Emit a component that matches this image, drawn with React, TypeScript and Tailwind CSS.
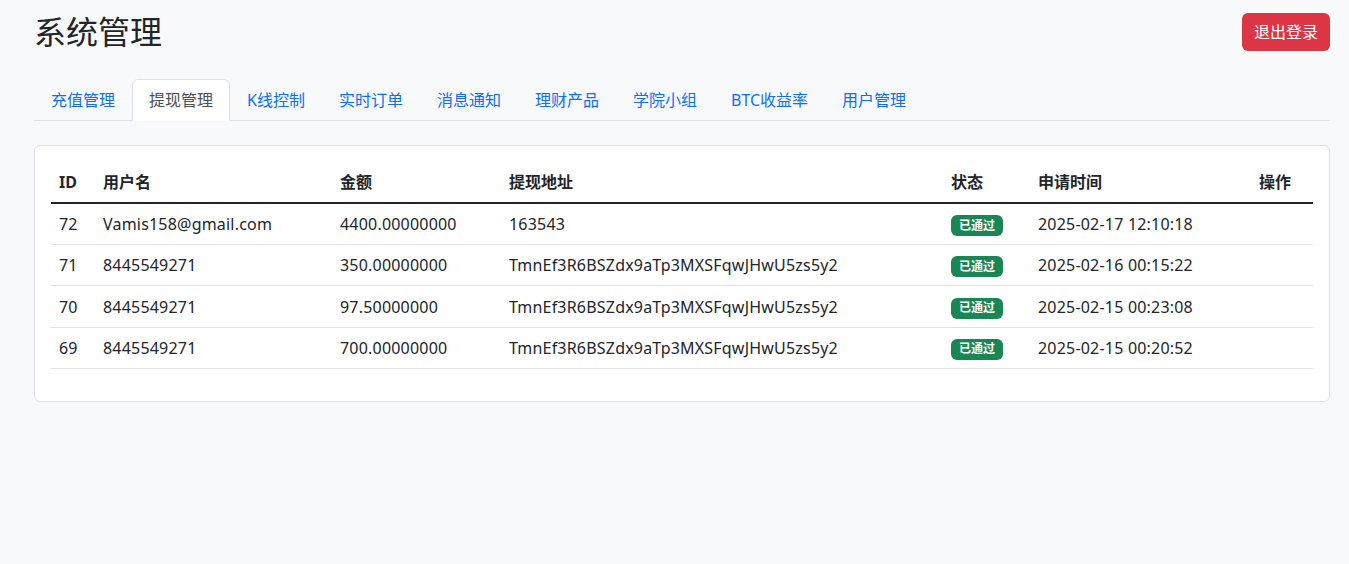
import React from "react";

const tabs = ["充值管理", "提现管理", "K线控制", "实时订单", "消息通知", "理财产品", "学院小组", "BTC收益率", "用户管理"];

const rows = [
  { id: 72, user: "Vamis158@gmail.com", amount: "4400.00000000", address: "163543", time: "2025-02-17 12:10:18" },
  { id: 71, user: "8445549271", amount: "350.00000000", address: "TmnEf3R6BSZdx9aTp3MXSFqwJHwU5zs5y2", time: "2025-02-16 00:15:22" },
  { id: 70, user: "8445549271", amount: "97.50000000", address: "TmnEf3R6BSZdx9aTp3MXSFqwJHwU5zs5y2", time: "2025-02-15 00:23:08" },
  { id: 69, user: "8445549271", amount: "700.00000000", address: "TmnEf3R6BSZdx9aTp3MXSFqwJHwU5zs5y2", time: "2025-02-15 00:20:52" },
];

export default function App() {
  return (
    <div className="min-h-[564px] bg-[#f8f9fa] text-[#212529] text-[16px] leading-[1.5] font-['Noto_Sans','Noto_Sans_CJK_SC',sans-serif]">
      <div className="w-[1296px] ml-[34px] pt-[13px]">
        {/* Header */}
        <div className="flex items-center justify-between">
          <h2 className="text-[32px] leading-[38px] font-normal">系统管理</h2>
          <button className="h-[38px] px-[12px] rounded-[6px] bg-[#dc3545] text-white text-[16px]">退出登录</button>
        </div>

        {/* Tabs */}
        <ul className="mt-[28px] flex border-b border-[#dee2e6]">
          {tabs.map((t, i) => (
            <li key={t} className="-mb-px">
              <a
                className={`block px-[16px] py-[8px] border rounded-t-[6px] ${
                  i === 1 ? "bg-white border-[#dee2e6] border-b-white text-[#495057]" : "border-transparent text-[#0d6efd]"
                }`}
              >
                {t}
              </a>
            </li>
          ))}
        </ul>

        {/* Card */}
        <div className="mt-[24px] bg-white border border-[#dee2e6] rounded-[6px] p-[16px]">
          <table className="w-full table-fixed border-collapse mb-[16px]">
            <colgroup>
              <col className="w-[44px]" />
              <col className="w-[237px]" />
              <col className="w-[169px]" />
              <col className="w-[442px]" />
              <col className="w-[87px]" />
              <col className="w-[221px]" />
              <col />
            </colgroup>
            <thead>
              <tr className="border-b-2 border-[#212529]">
                {["ID", "用户名", "金额", "提现地址", "状态", "申请时间", "操作"].map(h => (
                  <th key={h} className="h-[41px] text-left font-bold px-[8px] py-[8px] whitespace-nowrap">{h}</th>
                ))}
              </tr>
            </thead>
            <tbody>
              {rows.map(r => (
                <tr key={r.id} className="border-b border-[#dee2e6] tracking-[0.2px]">
                  <td className="h-[41px] px-[8px] py-[8px]">{r.id}</td>
                  <td className="h-[41px] px-[8px] py-[8px]">{r.user}</td>
                  <td className="h-[41px] px-[8px] py-[8px]">{r.amount}</td>
                  <td className="h-[41px] px-[8px] py-[8px] whitespace-nowrap">{r.address}</td>
                  <td className="h-[41px] px-[8px] py-[8px] tracking-normal">
                    <span className="inline-block align-middle px-[8px] py-[4.5px] rounded-[6px] bg-[#198754] text-white text-[12px] leading-none font-bold">已通过</span>
                  </td>
                  <td className="h-[41px] px-[8px] py-[8px] whitespace-nowrap">{r.time}</td>
                  <td className="h-[41px] px-[8px] py-[8px]"></td>
                </tr>
              ))}
            </tbody>
          </table>
        </div>
      </div>
    </div>
  );
}
